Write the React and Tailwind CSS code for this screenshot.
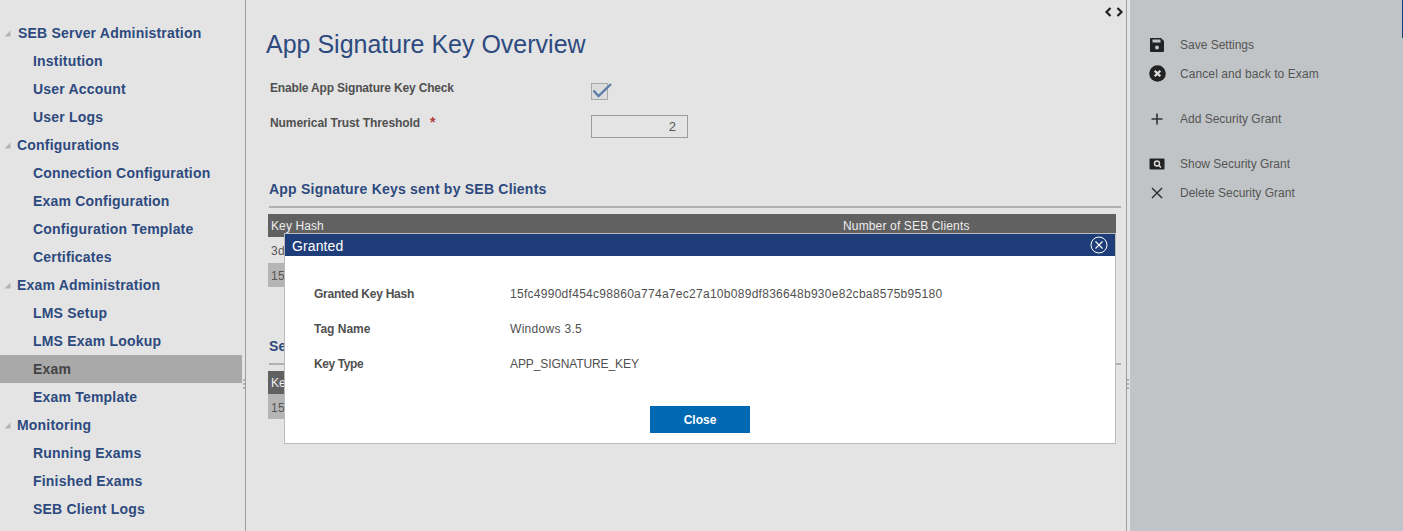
import React from "react";

const nav = [
  ["SEB Server Administration", 0, 18],
  ["Institution", 1],
  ["User Account", 1],
  ["User Logs", 1],
  ["Configurations", 0, 17],
  ["Connection Configuration", 1],
  ["Exam Configuration", 1],
  ["Configuration Template", 1],
  ["Certificates", 1],
  ["Exam Administration", 0, 17],
  ["LMS Setup", 1],
  ["LMS Exam Lookup", 1],
  ["Exam", 2],
  ["Exam Template", 1],
  ["Monitoring", 0, 17],
  ["Running Exams", 1],
  ["Finished Exams", 1],
  ["SEB Client Logs", 1],
];

function Tri() {
  return (
    <svg width="7" height="7" viewBox="0 0 7 7" className="absolute left-[4px] top-[11px]">
      <path d="M6.5 0.5V6.5H0.5Z" fill="#b4b4b4" />
    </svg>
  );
}

function Dots({ cls }) {
  return (
    <div className={"absolute flex flex-col gap-[2px] " + cls}>
      <span className="w-[2px] h-[2px] bg-[#b0b0b0]" />
      <span className="w-[2px] h-[2px] bg-[#b0b0b0]" />
      <span className="w-[2px] h-[2px] bg-[#b0b0b0]" />
    </div>
  );
}

function Sidebar() {
  return (
    <aside className="relative w-[246px] shrink-0 h-full pt-[19px] border-r-[1px] border-[#9d9fa1] bg-[#e4e4e4]">
      <div className="w-[242px]">
        {nav.map(([t, kind, left]) => (
          <div
            key={t}
            className={
              "relative h-[28px] leading-[28px] text-[14px] font-bold tracking-[0.2px] whitespace-nowrap " +
              (kind === 2 ? "bg-[#a9a9a9] text-[#434343] " : "text-[#2d4a7e] ")
            }
          >
            {kind === 0 && <Tri />}
            <span className={kind === 0 ? (left === 18 ? "pl-[18px]" : "pl-[17px]") : "pl-[33px]"}>{t}</span>
          </div>
        ))}
      </div>
      <Dots cls="left-[243px] top-[379px]" />
    </aside>
  );
}

function Table({ rows, second }) {
  return (
    <div className="ml-[22px] w-[848px] text-[12px]">
      <div className="h-[23px] bg-[#616161] text-[#eeeeee] flex items-end leading-[15px] pl-[3px] pb-[3px]">
        <span className="w-[572px] tracking-[0.1px]">Key Hash</span>
        {second !== false && <span className="tracking-[0.15px]">Number of SEB Clients</span>}
      </div>
      {rows.map((r) => (
        <div key={r[0]} className={"flex items-center pl-[3px] pt-[2px] text-[#555555] tracking-[0.28px] " + r[2]}>
          <span className="w-[572px]">{r[0]}</span>
          <span>{r[1]}</span>
        </div>
      ))}
    </div>
  );
}

function Section({ title }) {
  return (
    <div className="ml-[23px] w-[852px] h-[27px] border-b-[2px] border-[#b1b1b1] text-[14px] leading-[16px] font-bold tracking-[0.22px] text-[#2d4a7e]">
      {title}
    </div>
  );
}

function Main() {
  return (
    <main className="w-[880px] shrink-0 h-full bg-[#e4e4e4] pt-[6px]">
      <div className="flex justify-end pr-[2px] h-[12px] gap-[4px] text-[#222222]">
        <svg width="8" height="12" viewBox="0 0 8 12">
          <path d="M6.500 2 2.500 6 6.500 10" fill="none" stroke="#222222" strokeWidth="2.200" />
        </svg>
        <svg width="8" height="12" viewBox="0 0 8 12">
          <path d="M1.500 2 5.500 6 1.500 10" fill="none" stroke="#222222" strokeWidth="2.200" />
        </svg>
      </div>
      <h1 className="ml-[20px] mt-[11px] text-[25px] leading-[30px] text-[#2d4a7e]">
        App Signature Key Overview
      </h1>
      <div className="ml-[24px] mt-[14px] h-[38px] flex text-[12px] font-bold text-[#505050]">
        <span className="w-[321px] mt-[8px] leading-[14px] tracking-[-0.17px]">Enable App Signature Key Check</span>
        <span className="relative mt-[10px] w-[17px] h-[17px] border border-[#a8a8a8] bg-[#dcdcdc]">
          <svg width="22" height="17" viewBox="0 0 22 17" className="absolute left-0 top-[-2px]">
            <path d="M1.500 8.500 6.500 14 19 2" fill="none" stroke="#5d7ea8" strokeWidth="2.400" />
          </svg>
        </span>
      </div>
      <div className="ml-[24px] mt-[4px] flex text-[12px] font-bold text-[#505050]">
        <span className="w-[321px] leading-[14px] tracking-[-0.08px]">
          Numerical Trust Threshold
          <span className="ml-[10px] text-[14px] text-[#b03a3a]">*</span>
        </span>
        <span className="w-[97px] h-[23px] border border-[#9c9c9c] text-right pr-[11px] leading-[22px] font-normal text-[13px] text-[#555555]">
          2
        </span>
      </div>
      <div className="mt-[43px]">
        <Section title="App Signature Keys sent by SEB Clients" />
      </div>
      <div className="mt-[6px]">
        <Table
          rows={[
            ["3d1f6a72c0e84b95", "1", "h-[26px]"],
            ["15fc4990df454c98860a774a7ec27a10b089df836648b930e82cba8575b95180", "1", "h-[24px] bg-[#b5b5b5]"],
          ]}
        />
      </div>
      <div className="mt-[51px]">
        <Section title="Security Grants" />
      </div>
      <div className="mt-[6px]">
        <Table
          second={false}
          rows={[["15fc4990df454c98860a774a7ec27a10b089df836648b930e82cba8575b95180", "", "h-[25px] bg-[#b5b5b5]"]]}
        />
      </div>
    </main>
  );
}

const acts = [
  ["Save Settings", "save", ""],
  ["Cancel and back to Exam", "cancel", "tracking-[0.09px]"],
  ["Add Security Grant", "plus", "mt-[16px]"],
  ["Show Security Grant", "show", "mt-[16px]"],
  ["Delete Security Grant", "x", ""],
];

function Ic({ k }) {
  if (k === "save")
    return (
      <svg width="16" height="16" viewBox="0 0 16 16">
        <path d="M2 1H12L15 4V14A1 1 0 0 1 14 15H2A1 1 0 0 1 1 14V2A1 1 0 0 1 2 1Z" fill="#222222" />
        <rect x="3.500" y="2.500" width="8" height="3" fill="#c1c4c7" />
        <circle cx="8" cy="10.500" r="2" fill="#c1c4c7" />
      </svg>
    );
  if (k === "cancel")
    return (
      <svg width="17" height="17" viewBox="0 0 17 17">
        <circle cx="8.500" cy="8.500" r="8.300" fill="#222222" />
        <path d="M5.700 5.700 11.300 11.300M11.300 5.700 5.700 11.300" stroke="#dddddd" strokeWidth="2.300" />
      </svg>
    );
  if (k === "plus")
    return (
      <svg width="16" height="16" viewBox="0 0 16 16">
        <path d="M8 2.500V13.500M2.500 8H13.500" stroke="#333333" strokeWidth="1.600" />
      </svg>
    );
  if (k === "show")
    return (
      <svg width="16" height="16" viewBox="0 0 16 16">
        <rect x="0.500" y="2.500" width="15" height="11" rx="1" fill="#222222" />
        <circle cx="8" cy="7.500" r="2.500" fill="none" stroke="#dddddd" strokeWidth="1.400" />
        <path d="M10 9.500 12 11.500" stroke="#dddddd" strokeWidth="1.600" />
      </svg>
    );
  return (
    <svg width="16" height="16" viewBox="0 0 16 16">
      <path d="M3 3 13 13M13 3 3 13" stroke="#333333" strokeWidth="1.500" />
    </svg>
  );
}

function Actions() {
  return (
    <aside className="relative w-[273px] shrink-0 h-full bg-[#c1c4c7] pt-[30px] pl-[19px] text-[12px] text-[#555555]">
      <div className="absolute right-0 top-0 w-[1px] h-[38px] bg-[#1f3d78]" />
      {acts.map(([t, k, c]) => (
        <div key={t} className={"h-[29px] flex items-center " + c}>
          <span className="w-[31px] flex"><Ic k={k} /></span>
          {t}
        </div>
      ))}
    </aside>
  );
}

function Modal() {
  const rows = [
    ["Granted Key Hash", "15fc4990df454c98860a774a7ec27a10b089df836648b930e82cba8575b95180", "tracking-[-0.25px]", "tracking-[0.28px]"],
    ["Tag Name", "Windows 3.5", "", "tracking-[0.3px]"],
    ["Key Type", "APP_SIGNATURE_KEY", "tracking-[-0.4px]", "tracking-[-0.1px]"],
  ];
  return (
    <div className="absolute left-[284px] top-[233px] w-[832px] h-[211px] bg-white border border-[#bbbbbb] flex flex-col">
      <div className="h-[22px] bg-[#1f3d78] text-white text-[14px] leading-[24px] pl-[7px] flex justify-between pr-[7px]">
        <span className="tracking-[0.1px]">Granted</span>
        <svg width="18" height="18" viewBox="0 0 18 18" className="mt-[2px]">
          <circle cx="9" cy="9" r="8" fill="none" stroke="#ffffff" strokeWidth="1" />
          <path d="M5.500 5.500 12.500 12.500M12.500 5.500 5.500 12.500" stroke="#ffffff" strokeWidth="1.100" />
        </svg>
      </div>
      <div className="pt-[20px] pl-[29px] text-[12px] text-[#505050]">
        {rows.map(([a, b, ca, cb]) => (
          <div key={a} className="h-[35px] flex items-center">
            <span className={"w-[196px] font-bold " + ca}>{a}</span>
            <span className={cb}>{b}</span>
          </div>
        ))}
      </div>
      <button className="mt-[25px] ml-[365px] w-[100px] h-[27px] bg-[#0069b4] text-white text-[12px] font-bold">
        Close
      </button>
    </div>
  );
}

export default function App() {
  return (
    <div
      className="relative w-[1403px] h-[531px] overflow-hidden flex bg-[#e4e4e4]"
      style={{ fontFamily: '"Liberation Sans", Arial, sans-serif' }}
    >
      <Sidebar />
      <Main />
      <div className="w-[1px] h-full bg-[#9d9fa1] shrink-0" />
      <div className="w-[3px] h-full shrink-0" />
      <Actions />
      <Dots cls="left-[1127px] top-[379px]" />
      <Modal />
    </div>
  );
}
